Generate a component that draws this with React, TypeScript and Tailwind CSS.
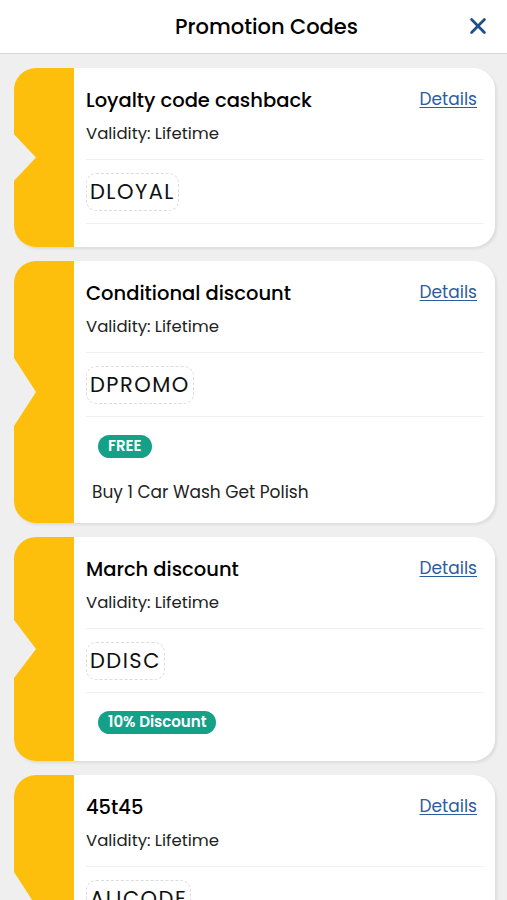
import React from 'react';

type Promo = {
    title: string;
    code: string;
    badge?: string;
    note?: string;
};

const promos: Promo[] = [
    { title: 'Loyalty code cashback', code: 'DLOYAL' },
    { title: 'Conditional discount', code: 'DPROMO', badge: 'FREE', note: 'Buy 1 Car Wash Get Polish' },
    { title: 'March discount', code: 'DDISC', badge: '10% Discount' },
    { title: '45t45', code: 'ALICODE', badge: 'FREE', note: 'Buy 1 Car Wash Get Polish' },
];

function PromoCard({ promo }: { promo: Promo }) {
    return (
        <div className="flex w-full rounded-[22px] shadow-[2px_2px_3px_rgba(0,0,0,0.08)]">
            <div className="w-[60px] shrink-0 rounded-l-[22px] bg-[#fdbf0b] [clip-path:polygon(0_0,100%_0,100%_100%,0_100%,0_63%,22px_50%,0_37%)]" />
            <div className="flex-1 flex flex-col bg-white rounded-r-[22px] pl-3 pr-[11px] pt-[20px] pb-[23px]">
                <div className="flex items-start justify-between">
                    <div className="text-[19.5px] font-medium text-black leading-[26px]">{promo.title}</div>
                    <a className="text-[17px] text-[#2c5d9c] underline underline-offset-2 leading-[22px] mr-[7px]">Details</a>
                </div>
                <div className="text-[16.5px] text-[#222] mt-[9px] leading-[22px]">Validity: Lifetime</div>
                <div className="border-t border-[#f0f0f0] mt-[14px]" />
                <div className="mt-[13px] self-start rounded-[10px] border border-dashed border-[#dcdcdc] px-[3px] h-[38px] flex items-center">
                    <span className="text-[21px] tracking-[1.5px] text-[#111] font-normal">{promo.code}</span>
                </div>
                <div className="border-t border-[#f0f0f0] mt-[12px]" />
                {promo.badge && (
                    <div className="mt-[18px] mb-[4px] ml-3 self-start rounded-full bg-[#15a088] px-[10px] h-[23px] flex items-center text-[15px] font-semibold text-white">
                        {promo.badge}
                    </div>
                )}
                {promo.note && (
                    <div className="mt-[19px] ml-[6px] text-[17px] text-[#222] leading-[22px] -mb-[3px]">{promo.note}</div>
                )}
            </div>
        </div>
    );
}

const App: React.FC = () => {
    return (
        <div className="min-h-screen bg-[#efefef]" style={{ fontFamily: 'Poppins, Inter, "Open Sans", sans-serif' }}>
            <div className="relative h-[54px] bg-white border-b border-[#d9d9d9] flex items-center justify-center pl-[26px]">
                <div className="text-[21px] font-medium text-black">Promotion Codes</div>
                <button className="absolute right-[18px] top-[15px] text-[#1d4f8c]">
                    <svg width="22" height="22" viewBox="0 0 24 24" fill="none" stroke="currentColor" strokeWidth="3" strokeLinecap="round">
                        <path d="M5 5l14 14M19 5L5 19" />
                    </svg>
                </button>
            </div>
            <div className="flex flex-col gap-[14px] pl-[14px] pr-[12px] pt-[14px] pb-6">
                {promos.map((p, i) => (
                    <PromoCard key={i} promo={p} />
                ))}
            </div>
        </div>
    );
};

export default App;
